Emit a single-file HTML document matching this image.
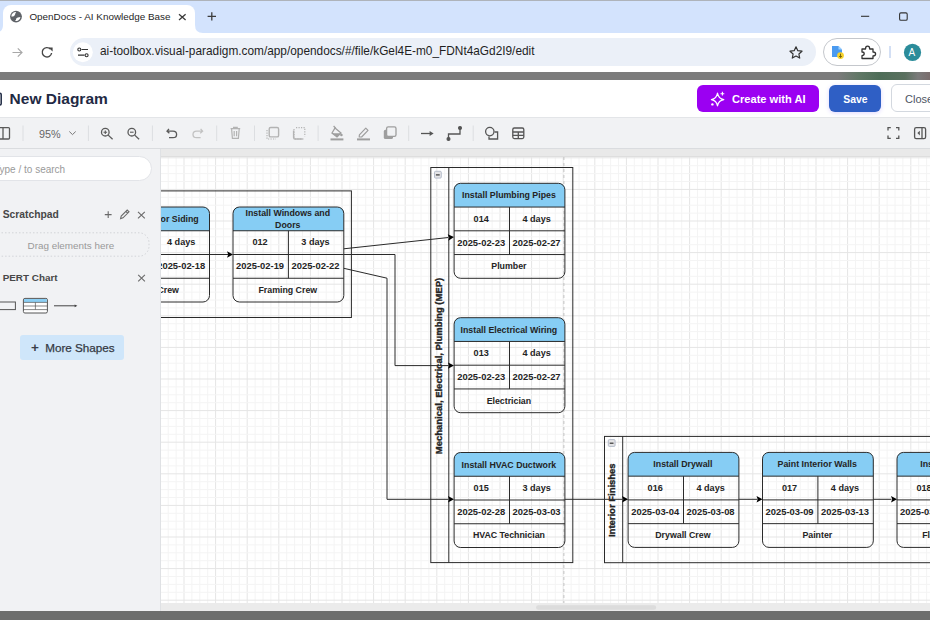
<!DOCTYPE html>
<html><head><meta charset="utf-8">
<style>
html,body{margin:0;padding:0;}
body{width:930px;height:620px;overflow:hidden;position:relative;background:#fff;font-family:"Liberation Sans",sans-serif;}
.a{position:absolute;}
svg{position:absolute;left:0;top:0;}
.t{white-space:nowrap;line-height:1;}
</style></head>
<body>
<!-- top border -->
<div class="a" style="left:0;top:0;width:930px;height:1px;background:#aeb3ba"></div>
<!-- tab bar -->
<div class="a" style="left:0;top:1px;width:930px;height:32px;background:#d3e3fd"></div>
<!-- active tab -->
<div class="a" style="left:3px;top:5px;width:192px;height:30px;background:#fff;border-radius:8px 8px 0 0"></div>
<svg width="930" height="40" style="left:0;top:0">
  <path d="M-6,33 Q3,33 3,25 L3,33 Z" fill="#fff"/>
  <path d="M195,25 Q195,33 203,33 L195,33 Z" fill="#fff"/>
  <!-- globe -->
  <circle cx="16" cy="16.6" r="5.9" fill="#5f6368"/>
  <path d="M11.3,16.6 Q11.2,13.6 13.6,12.4 Q15,11.8 16.2,12.2 Q15.2,13 15.1,14.6 Q14.6,16 13.2,16.6 Z" fill="#fff"/>
  <path d="M14.9,20.9 Q16.4,20.4 16.2,18.6 Q17.2,17.3 20.4,17.0 Q20.4,19.2 18.2,20.5 Q16.4,21.4 14.9,20.9 Z" fill="#fff"/>
  <!-- close x -->
  <path d="M179,14.3 L185.6,20 M185.6,14.3 L179,20" stroke="#3c3c3c" stroke-width="1.3"/>
  <!-- plus -->
  <path d="M211.8,12.3 L211.8,20.6 M207.6,16.45 L216,16.45" stroke="#3c3c3c" stroke-width="1.3"/>
  <!-- minimize -->
  <path d="M861,16.3 L869.2,16.3" stroke="#333" stroke-width="1.1"/>
  <rect x="899.6" y="12.9" width="7.6" height="7.4" rx="1.3" fill="none" stroke="#333" stroke-width="1.1"/>
</svg>
<div class="a t" style="left:29.4px;top:12.0px;font-size:9.88px;color:#262626">OpenDocs - AI Knowledge Base</div>

<!-- address toolbar -->
<div class="a" style="left:0;top:33px;width:930px;height:39px;background:#fff"></div>
<div class="a" style="left:69.5px;top:38.3px;width:746px;height:27.8px;background:#ebf0f8;border-radius:14px"></div>
<div class="a" style="left:823.3px;top:38.1px;width:57.5px;height:27.5px;border:1px solid #c4c7cc;border-radius:14px;box-sizing:border-box"></div>
<svg width="930" height="72" style="left:0;top:0">
  <!-- forward arrow -->
  <path d="M12.5,52.5 L22,52.5 M17.8,48.3 L22,52.5 L17.8,56.7" stroke="#a8a8a8" stroke-width="1.2" fill="none"/>
  <!-- reload -->
  <path d="M51.6,53 A4.7,4.7 0 1 1 50.3,49" stroke="#474747" stroke-width="1.4" fill="none"/>
  <path d="M48.4,47.4 L52.6,47.4 L52.6,51.4 Z" fill="#474747"/>
  <!-- site info -->
  <circle cx="82.8" cy="52.3" r="10" fill="#fff"/>
  <path d="M81.5,49.5 L88,49.5 M78,55.2 L84.5,55.2" stroke="#333" stroke-width="1.2"/>
  <circle cx="79.3" cy="49.5" r="1.5" fill="none" stroke="#333" stroke-width="1.1"/>
  <circle cx="86.6" cy="55.2" r="1.5" fill="none" stroke="#333" stroke-width="1.1"/>
  <!-- star -->
  <path d="M796,46.8 L797.8,50.7 L802,51.2 L798.9,54 L799.7,58.1 L796,56 L792.3,58.1 L793.1,54 L790,51.2 L794.2,50.7 Z" fill="none" stroke="#333" stroke-width="1.2" stroke-linejoin="round"/>
  <!-- ext icon 1 -->
  <path d="M832,46 L838.5,46 L842,49.5 L842,57 L832,57 Z" fill="#4a9af0"/>
  <path d="M838.5,46 L842,49.5 L838.5,49.5 Z" fill="#9fd3ff"/>
  <circle cx="840.5" cy="55.6" r="3.4" fill="#f6d22b"/>
  <path d="M840.5,53.7 L840.5,57.2 M839,56 L840.5,57.4 L842,56" stroke="#5b4a00" stroke-width="0.8" fill="none"/>
  <!-- puzzle -->
  <path d="M862,49 L865.5,49 Q865.5,46.2 867.6,46.2 Q869.7,46.2 869.7,49 L873,49 L873,52 Q875.6,52 875.6,53.9 Q875.6,55.8 873,55.8 L873,58.5 L862,58.5 L862,55.6 Q864.2,55.6 864.2,53.8 Q864.2,52 862,52 Z" fill="none" stroke="#333" stroke-width="1.3" stroke-linejoin="round"/>
  <!-- separator -->
  <path d="M890,46 L890,58" stroke="#a8c0ea" stroke-width="1"/>
  <!-- avatar -->
  <circle cx="912.5" cy="52.4" r="8.6" fill="#2b8c9a"/>
</svg>
<div class="a t" style="left:100px;top:46.2px;font-size:11.85px;color:#1f1f1f">ai-toolbox.visual-paradigm.com/app/opendocs/#/file/kGel4E-m0_FDNt4aGd2I9/edit</div>
<div class="a t" style="left:908.6px;top:47.6px;font-size:10px;color:#fff">A</div>

<!-- dark bar -->
<div class="a" style="left:0;top:72px;width:930px;height:8.2px;background:linear-gradient(90deg,#7b7b7b 0,#7b7b7b 838px,#5f7765 860px,#4e6d58 880px,#5a705f 905px,#7b7b7b 918px,#7a6d6d 930px)"></div>

<!-- app header -->
<div class="a" style="left:0;top:80.2px;width:930px;height:37px;background:#fff"></div>
<svg width="20" height="120" style="left:0;top:0"><path d="M-6,93.2 L0,93.2 Q1.2,93.2 1.2,94.4 L1.2,103.8 Q1.2,105 0,105 L-6,105" fill="none" stroke="#1f2a44" stroke-width="1.5"/></svg>
<div class="a t" style="left:9.6px;top:90.5px;font-size:15.5px;font-weight:bold;color:#1f2a44">New Diagram</div>
<div class="a" style="left:692px;top:80.5px;width:135px;height:36px;background:radial-gradient(ellipse at center,rgba(170,120,255,0.18),rgba(255,255,255,0) 70%)"></div>
<div class="a" style="left:697.1px;top:84.7px;width:121.8px;height:27.5px;background:#9b00f2;border-radius:6px"></div>
<svg width="930" height="120" style="left:0;top:0">
  <path d="M717.5,93.2 Q718.6,99 723.8,99.6 Q718.6,100.4 717.5,105.8 Q716.4,100.4 711.4,99.6 Q716.4,99 717.5,93.2 Z" fill="none" stroke="#fff" stroke-width="1.2" stroke-linejoin="round"/>
  <path d="M722.4,91.8 L722.4,95.6 M720.5,93.7 L724.3,93.7" stroke="#fff" stroke-width="1.1"/>
  <circle cx="712.4" cy="104.4" r="1.2" fill="#fff"/>
</svg>
<div class="a t" style="left:732px;top:94.0px;font-size:11.1px;font-weight:bold;color:#fff">Create with AI</div>
<div class="a" style="left:829.4px;top:85px;width:51.4px;height:27px;background:#2f5fc5;border-radius:6px;box-shadow:0 1px 4px rgba(120,90,255,0.25)"></div>
<div class="a t" style="left:843.3px;top:94.8px;font-size:10.4px;font-weight:bold;color:#fff">Save</div>
<div class="a" style="left:891.1px;top:84.3px;width:60px;height:27.9px;background:#fff;border:1px solid #d3d8df;border-radius:6px;box-sizing:border-box"></div>
<div class="a t" style="left:905px;top:93.6px;font-size:11px;color:#4d5563">Close</div>

<!-- toolbar -->
<div class="a" style="left:0;top:117px;width:930px;height:32px;background:#f1f2f4;border-top:1px solid #e3e5e8;border-bottom:1px solid #dadcdf;box-sizing:border-box"></div>
<svg width="930" height="150" style="left:0;top:0">
  <g fill="none" stroke="#5a5a5a" stroke-width="1.3">
    <!-- left panel icon -->
    <path d="M-2,127.6 L8.5,127.6 Q9.5,127.6 9.5,128.6 L9.5,138 Q9.5,139 8.5,139 L-2,139 M3,127.6 L3,139"/>
    <!-- chevron -->
    <path d="M69.3,131.5 L72.5,134.6 L75.7,131.5" stroke="#777" stroke-width="1"/>
    <!-- zoom in -->
    <circle cx="105.3" cy="132.2" r="3.8"/>
    <path d="M108.2,135.1 L112.6,139.3"/>
    <path d="M103.5,132.2 L107.1,132.2 M105.3,130.4 L105.3,134" stroke-width="1.1"/>
    <!-- zoom out -->
    <circle cx="131.8" cy="132.2" r="3.8"/>
    <path d="M134.7,135.1 L139.1,139.3"/>
    <path d="M130,132.2 L133.6,132.2" stroke-width="1.1"/>
    <!-- undo -->
    <path d="M169,128.8 L167,131.2 L169.4,133.3 M167.2,131.2 L173,131.2 Q176.6,131.2 176.6,134.4 Q176.6,137.6 173,137.6 L169,137.6"/>
    <!-- redo -->
    <path d="M200.6,128.8 L202.6,131.2 L200.2,133.3 M202.4,131.2 L196.6,131.2 Q193,131.2 193,134.4 Q193,137.6 196.6,137.6 L200.6,137.6" stroke="#c2c2c2"/>
  </g>
  <g fill="none" stroke="#b3b3b3" stroke-width="1.2">
    <!-- trash -->
    <path d="M230.6,128.6 L240.2,128.6 M233.6,128.6 L233.6,127.4 L237.2,127.4 L237.2,128.6 M231.6,129 L232.4,138.4 L238.4,138.4 L239.2,129 M234.2,131 L234.2,136.2 M236.6,131 L236.6,136.2"/>
    <!-- to front -->
    <rect x="269.2" y="127.5" width="9.4" height="9.4" rx="1.5" stroke-width="1.4"/>
    <path d="M267,130 L267,139 L276,139" stroke-dasharray="1.2,1.3"/>
    <!-- to back -->
    <path d="M296,127.6 L304.8,127.6 L304.8,136.4 M294,129 L294,137.6 Q294,139 295.4,139 L304,139" stroke-dasharray="1.2,1.3"/>
    <path d="M293.6,130.4 L293.6,137.4 Q293.6,139 295.2,139 L302.6,139" stroke-width="1.4"/>
  </g>
  <g fill="#9e9e9e" stroke="none">
    <!-- fill bucket -->
    <path d="M335,128 L341,133 L337,137 L332,133 Z" fill="none" stroke="#9e9e9e" stroke-width="1.3"/>
    <path d="M332.2,133.2 L340.6,133.2 L337,136.8 Z"/>
    <path d="M333.6,126 L335.8,128.4" stroke="#9e9e9e" stroke-width="1.2"/>
    <circle cx="341.4" cy="135" r="1.3"/>
    <rect x="330.5" y="138.4" width="12.9" height="2" />
    <!-- pen -->
    <path d="M359.4,134.8 L365.8,128.2 L368,130.4 L361.6,137 L359.2,137 Z" fill="none" stroke="#9e9e9e" stroke-width="1.2" stroke-linejoin="round"/>
    <rect x="357" y="138.4" width="13" height="2"/>
    <!-- shadow -->
    <rect x="383.8" y="129.8" width="9.2" height="9.2" rx="1.6"/>
    <rect x="386.6" y="126.9" width="9.4" height="9.4" rx="1.6" fill="#f1f2f4" stroke="#9e9e9e" stroke-width="1.3"/>
  </g>
  <g fill="none" stroke="#555" stroke-width="1.3">
    <!-- arrow -->
    <path d="M421,133.5 L430,133.5"/><path d="M429.6,131 L433.6,133.5 L429.6,136 Z" fill="#555" stroke="none"/>
    <!-- waypoint -->
    <path d="M448.5,139 L448.5,134 L460,134 L460,128.6"/>
    <circle cx="448.5" cy="139" r="1.4" fill="#555"/>
    <circle cx="460" cy="128" r="1.4" fill="#555"/>
    <!-- shapes -->
    <circle cx="489.8" cy="131.6" r="4.2"/>
    <path d="M494.6,132 L497.6,132 L497.6,139 L489,139 L489,136.4"/>
    <!-- table -->
    <rect x="512.8" y="128" width="11" height="10.6" rx="1.5"/>
    <path d="M512.8,132 L523.8,132 M512.8,135.3 L523.8,135.3 M518.3,132 L518.3,138.6"/>
    <!-- fullscreen -->
    <path d="M888,130.5 L888,127.7 L890.8,127.7 M896,127.7 L898.8,127.7 L898.8,130.5 M888,135.6 L888,138.4 L890.8,138.4 M898.8,135.6 L898.8,138.4 L896,138.4"/>
    <!-- panel right -->
    <rect x="914.6" y="127.6" width="11" height="11" rx="1.6"/>
    <path d="M922,127.6 L922,138.6"/>
    <path d="M919.8,130.8 L917.4,133.1 L919.8,135.4 Z" fill="#555" stroke="none"/>
  </g>
  <!-- separators -->
  <g stroke="#dcdee1" stroke-width="1">
    <path d="M23,125.5 L23,141"/><path d="M88.4,125.5 L88.4,141"/><path d="M152.4,125.5 L152.4,141"/>
    <path d="M216.7,125.5 L216.7,141"/><path d="M254.5,125.5 L254.5,141"/><path d="M318.1,125.5 L318.1,141"/>
    <path d="M408.7,125.5 L408.7,141"/><path d="M473.2,125.5 L473.2,141"/>
  </g>
</svg>
<div class="a t" style="left:39px;top:129px;font-size:10.8px;color:#666">95%</div>

<!-- sidebar -->
<div class="a" style="left:0;top:149px;width:160.5px;height:463px;background:#f1f2f4;border-right:1px solid #dfe1e4;box-sizing:border-box"></div>
<div class="a" style="left:-20px;top:156.1px;width:171.8px;height:25.3px;background:#fff;border:1px solid #e2e4e8;border-radius:13px;box-sizing:border-box"></div>
<div class="a t" style="left:-6px;top:164.6px;font-size:10px;color:#9a9a9a">Type / to search</div>
<div class="a t" style="left:2.7px;top:209.6px;font-size:10.3px;font-weight:bold;color:#474747">Scratchpad</div>
<svg width="160" height="400" style="left:0;top:0">
  <g stroke="#6a6a6a" stroke-width="1.1" fill="none">
    <path d="M108.2,211.3 L108.2,218 M104.8,214.6 L111.6,214.6"/>
    <path d="M120.6,218.6 L121.2,216 L127.2,210 L129,211.8 L123,217.8 Z M125.8,211.4 L127.6,213.2"/>
    <path d="M138,211.8 L144.8,218.4 M144.8,211.8 L138,218.4"/>
    <path d="M138.2,274.8 L144.9,281.4 M144.9,274.8 L138.2,281.4"/>
  </g>
  <rect x="-12" y="232.8" width="161" height="23.4" rx="10" fill="none" stroke="#d2d4d8" stroke-width="1" stroke-dasharray="1.5,2"/>
  <!-- shapes -->
  <rect x="-4" y="302" width="19.4" height="7.6" fill="none" stroke="#555" stroke-width="1"/>
  <rect x="23.4" y="298.4" width="24" height="14.6" rx="1.5" fill="#fff" stroke="#555" stroke-width="1"/>
  <rect x="24" y="299" width="22.8" height="3.4" fill="#8ccff4"/>
  <path d="M23.4,302.4 L47.4,302.4 M23.4,306 L47.4,306 M23.4,309.6 L47.4,309.6 M35.4,302.4 L35.4,309.6" stroke="#555" stroke-width="0.7"/>
  <path d="M54,305.8 L76,305.8" stroke="#444" stroke-width="1"/>
  <path d="M77.4,305.8 L74.6,304.4 L74.6,307.2 Z" fill="#444"/>
</svg>
<div class="a t" style="left:27.5px;top:240.8px;font-size:9.9px;color:#999">Drag elements here</div>
<div class="a t" style="left:2.7px;top:273.4px;font-size:9.9px;font-weight:bold;color:#474747">PERT Chart</div>
<div class="a" style="left:20px;top:335.4px;width:103.8px;height:24.5px;background:#cfe6fa;border-radius:3px"></div>
<div class="a t" style="left:31px;top:341.2px;font-size:13.5px;color:#3a3f4a;font-weight:bold">+</div>
<div class="a t" style="left:45.2px;top:342.2px;font-size:11.7px;color:#353a44;-webkit-text-stroke:0.25px #353a44">More Shapes</div>

<!-- canvas -->
<div class="a" style="left:160.5px;top:149px;width:770px;height:463px;background:#fff;overflow:hidden">
<svg width="770" height="463" style="left:0;top:0">
<g transform="translate(-160.5,-149)">
<rect x="160.5" y="149" width="770" height="8" fill="#e9e9e9"/>
<line x1="160.5" y1="156.6" x2="930" y2="156.6" stroke="#dddddd" stroke-width="1"/>
<line x1="167.70" y1="157.0" x2="167.70" y2="603.0" stroke="#f4f4f4" stroke-width="1"/>
<line x1="175.60" y1="157.0" x2="175.60" y2="603.0" stroke="#f4f4f4" stroke-width="1"/>
<line x1="183.50" y1="157.0" x2="183.50" y2="603.0" stroke="#e5e5e5" stroke-width="1"/>
<line x1="191.40" y1="157.0" x2="191.40" y2="603.0" stroke="#f4f4f4" stroke-width="1"/>
<line x1="199.30" y1="157.0" x2="199.30" y2="603.0" stroke="#f4f4f4" stroke-width="1"/>
<line x1="207.20" y1="157.0" x2="207.20" y2="603.0" stroke="#f4f4f4" stroke-width="1"/>
<line x1="215.10" y1="157.0" x2="215.10" y2="603.0" stroke="#e5e5e5" stroke-width="1"/>
<line x1="223.00" y1="157.0" x2="223.00" y2="603.0" stroke="#f4f4f4" stroke-width="1"/>
<line x1="230.90" y1="157.0" x2="230.90" y2="603.0" stroke="#f4f4f4" stroke-width="1"/>
<line x1="238.80" y1="157.0" x2="238.80" y2="603.0" stroke="#f4f4f4" stroke-width="1"/>
<line x1="246.70" y1="157.0" x2="246.70" y2="603.0" stroke="#e5e5e5" stroke-width="1"/>
<line x1="254.60" y1="157.0" x2="254.60" y2="603.0" stroke="#f4f4f4" stroke-width="1"/>
<line x1="262.50" y1="157.0" x2="262.50" y2="603.0" stroke="#f4f4f4" stroke-width="1"/>
<line x1="270.40" y1="157.0" x2="270.40" y2="603.0" stroke="#f4f4f4" stroke-width="1"/>
<line x1="278.30" y1="157.0" x2="278.30" y2="603.0" stroke="#e5e5e5" stroke-width="1"/>
<line x1="286.20" y1="157.0" x2="286.20" y2="603.0" stroke="#f4f4f4" stroke-width="1"/>
<line x1="294.10" y1="157.0" x2="294.10" y2="603.0" stroke="#f4f4f4" stroke-width="1"/>
<line x1="302.00" y1="157.0" x2="302.00" y2="603.0" stroke="#f4f4f4" stroke-width="1"/>
<line x1="309.90" y1="157.0" x2="309.90" y2="603.0" stroke="#e5e5e5" stroke-width="1"/>
<line x1="317.80" y1="157.0" x2="317.80" y2="603.0" stroke="#f4f4f4" stroke-width="1"/>
<line x1="325.70" y1="157.0" x2="325.70" y2="603.0" stroke="#f4f4f4" stroke-width="1"/>
<line x1="333.60" y1="157.0" x2="333.60" y2="603.0" stroke="#f4f4f4" stroke-width="1"/>
<line x1="341.50" y1="157.0" x2="341.50" y2="603.0" stroke="#e5e5e5" stroke-width="1"/>
<line x1="349.40" y1="157.0" x2="349.40" y2="603.0" stroke="#f4f4f4" stroke-width="1"/>
<line x1="357.30" y1="157.0" x2="357.30" y2="603.0" stroke="#f4f4f4" stroke-width="1"/>
<line x1="365.20" y1="157.0" x2="365.20" y2="603.0" stroke="#f4f4f4" stroke-width="1"/>
<line x1="373.10" y1="157.0" x2="373.10" y2="603.0" stroke="#e5e5e5" stroke-width="1"/>
<line x1="381.00" y1="157.0" x2="381.00" y2="603.0" stroke="#f4f4f4" stroke-width="1"/>
<line x1="388.90" y1="157.0" x2="388.90" y2="603.0" stroke="#f4f4f4" stroke-width="1"/>
<line x1="396.80" y1="157.0" x2="396.80" y2="603.0" stroke="#f4f4f4" stroke-width="1"/>
<line x1="404.70" y1="157.0" x2="404.70" y2="603.0" stroke="#e5e5e5" stroke-width="1"/>
<line x1="412.60" y1="157.0" x2="412.60" y2="603.0" stroke="#f4f4f4" stroke-width="1"/>
<line x1="420.50" y1="157.0" x2="420.50" y2="603.0" stroke="#f4f4f4" stroke-width="1"/>
<line x1="428.40" y1="157.0" x2="428.40" y2="603.0" stroke="#f4f4f4" stroke-width="1"/>
<line x1="436.30" y1="157.0" x2="436.30" y2="603.0" stroke="#e5e5e5" stroke-width="1"/>
<line x1="444.20" y1="157.0" x2="444.20" y2="603.0" stroke="#f4f4f4" stroke-width="1"/>
<line x1="452.10" y1="157.0" x2="452.10" y2="603.0" stroke="#f4f4f4" stroke-width="1"/>
<line x1="460.00" y1="157.0" x2="460.00" y2="603.0" stroke="#f4f4f4" stroke-width="1"/>
<line x1="467.90" y1="157.0" x2="467.90" y2="603.0" stroke="#e5e5e5" stroke-width="1"/>
<line x1="475.80" y1="157.0" x2="475.80" y2="603.0" stroke="#f4f4f4" stroke-width="1"/>
<line x1="483.70" y1="157.0" x2="483.70" y2="603.0" stroke="#f4f4f4" stroke-width="1"/>
<line x1="491.60" y1="157.0" x2="491.60" y2="603.0" stroke="#f4f4f4" stroke-width="1"/>
<line x1="499.50" y1="157.0" x2="499.50" y2="603.0" stroke="#e5e5e5" stroke-width="1"/>
<line x1="507.40" y1="157.0" x2="507.40" y2="603.0" stroke="#f4f4f4" stroke-width="1"/>
<line x1="515.30" y1="157.0" x2="515.30" y2="603.0" stroke="#f4f4f4" stroke-width="1"/>
<line x1="523.20" y1="157.0" x2="523.20" y2="603.0" stroke="#f4f4f4" stroke-width="1"/>
<line x1="531.10" y1="157.0" x2="531.10" y2="603.0" stroke="#e5e5e5" stroke-width="1"/>
<line x1="539.00" y1="157.0" x2="539.00" y2="603.0" stroke="#f4f4f4" stroke-width="1"/>
<line x1="546.90" y1="157.0" x2="546.90" y2="603.0" stroke="#f4f4f4" stroke-width="1"/>
<line x1="554.80" y1="157.0" x2="554.80" y2="603.0" stroke="#f4f4f4" stroke-width="1"/>
<line x1="562.70" y1="157.0" x2="562.70" y2="603.0" stroke="#e5e5e5" stroke-width="1"/>
<line x1="570.60" y1="157.0" x2="570.60" y2="603.0" stroke="#f4f4f4" stroke-width="1"/>
<line x1="578.50" y1="157.0" x2="578.50" y2="603.0" stroke="#f4f4f4" stroke-width="1"/>
<line x1="586.40" y1="157.0" x2="586.40" y2="603.0" stroke="#f4f4f4" stroke-width="1"/>
<line x1="594.30" y1="157.0" x2="594.30" y2="603.0" stroke="#e5e5e5" stroke-width="1"/>
<line x1="602.20" y1="157.0" x2="602.20" y2="603.0" stroke="#f4f4f4" stroke-width="1"/>
<line x1="610.10" y1="157.0" x2="610.10" y2="603.0" stroke="#f4f4f4" stroke-width="1"/>
<line x1="618.00" y1="157.0" x2="618.00" y2="603.0" stroke="#f4f4f4" stroke-width="1"/>
<line x1="625.90" y1="157.0" x2="625.90" y2="603.0" stroke="#e5e5e5" stroke-width="1"/>
<line x1="633.80" y1="157.0" x2="633.80" y2="603.0" stroke="#f4f4f4" stroke-width="1"/>
<line x1="641.70" y1="157.0" x2="641.70" y2="603.0" stroke="#f4f4f4" stroke-width="1"/>
<line x1="649.60" y1="157.0" x2="649.60" y2="603.0" stroke="#f4f4f4" stroke-width="1"/>
<line x1="657.50" y1="157.0" x2="657.50" y2="603.0" stroke="#e5e5e5" stroke-width="1"/>
<line x1="665.40" y1="157.0" x2="665.40" y2="603.0" stroke="#f4f4f4" stroke-width="1"/>
<line x1="673.30" y1="157.0" x2="673.30" y2="603.0" stroke="#f4f4f4" stroke-width="1"/>
<line x1="681.20" y1="157.0" x2="681.20" y2="603.0" stroke="#f4f4f4" stroke-width="1"/>
<line x1="689.10" y1="157.0" x2="689.10" y2="603.0" stroke="#e5e5e5" stroke-width="1"/>
<line x1="697.00" y1="157.0" x2="697.00" y2="603.0" stroke="#f4f4f4" stroke-width="1"/>
<line x1="704.90" y1="157.0" x2="704.90" y2="603.0" stroke="#f4f4f4" stroke-width="1"/>
<line x1="712.80" y1="157.0" x2="712.80" y2="603.0" stroke="#f4f4f4" stroke-width="1"/>
<line x1="720.70" y1="157.0" x2="720.70" y2="603.0" stroke="#e5e5e5" stroke-width="1"/>
<line x1="728.60" y1="157.0" x2="728.60" y2="603.0" stroke="#f4f4f4" stroke-width="1"/>
<line x1="736.50" y1="157.0" x2="736.50" y2="603.0" stroke="#f4f4f4" stroke-width="1"/>
<line x1="744.40" y1="157.0" x2="744.40" y2="603.0" stroke="#f4f4f4" stroke-width="1"/>
<line x1="752.30" y1="157.0" x2="752.30" y2="603.0" stroke="#e5e5e5" stroke-width="1"/>
<line x1="760.20" y1="157.0" x2="760.20" y2="603.0" stroke="#f4f4f4" stroke-width="1"/>
<line x1="768.10" y1="157.0" x2="768.10" y2="603.0" stroke="#f4f4f4" stroke-width="1"/>
<line x1="776.00" y1="157.0" x2="776.00" y2="603.0" stroke="#f4f4f4" stroke-width="1"/>
<line x1="783.90" y1="157.0" x2="783.90" y2="603.0" stroke="#e5e5e5" stroke-width="1"/>
<line x1="791.80" y1="157.0" x2="791.80" y2="603.0" stroke="#f4f4f4" stroke-width="1"/>
<line x1="799.70" y1="157.0" x2="799.70" y2="603.0" stroke="#f4f4f4" stroke-width="1"/>
<line x1="807.60" y1="157.0" x2="807.60" y2="603.0" stroke="#f4f4f4" stroke-width="1"/>
<line x1="815.50" y1="157.0" x2="815.50" y2="603.0" stroke="#e5e5e5" stroke-width="1"/>
<line x1="823.40" y1="157.0" x2="823.40" y2="603.0" stroke="#f4f4f4" stroke-width="1"/>
<line x1="831.30" y1="157.0" x2="831.30" y2="603.0" stroke="#f4f4f4" stroke-width="1"/>
<line x1="839.20" y1="157.0" x2="839.20" y2="603.0" stroke="#f4f4f4" stroke-width="1"/>
<line x1="847.10" y1="157.0" x2="847.10" y2="603.0" stroke="#e5e5e5" stroke-width="1"/>
<line x1="855.00" y1="157.0" x2="855.00" y2="603.0" stroke="#f4f4f4" stroke-width="1"/>
<line x1="862.90" y1="157.0" x2="862.90" y2="603.0" stroke="#f4f4f4" stroke-width="1"/>
<line x1="870.80" y1="157.0" x2="870.80" y2="603.0" stroke="#f4f4f4" stroke-width="1"/>
<line x1="878.70" y1="157.0" x2="878.70" y2="603.0" stroke="#e5e5e5" stroke-width="1"/>
<line x1="886.60" y1="157.0" x2="886.60" y2="603.0" stroke="#f4f4f4" stroke-width="1"/>
<line x1="894.50" y1="157.0" x2="894.50" y2="603.0" stroke="#f4f4f4" stroke-width="1"/>
<line x1="902.40" y1="157.0" x2="902.40" y2="603.0" stroke="#f4f4f4" stroke-width="1"/>
<line x1="910.30" y1="157.0" x2="910.30" y2="603.0" stroke="#e5e5e5" stroke-width="1"/>
<line x1="918.20" y1="157.0" x2="918.20" y2="603.0" stroke="#f4f4f4" stroke-width="1"/>
<line x1="926.10" y1="157.0" x2="926.10" y2="603.0" stroke="#f4f4f4" stroke-width="1"/>
<line x1="160.5" y1="157.80" x2="930" y2="157.80" stroke="#e5e5e5" stroke-width="1"/>
<line x1="160.5" y1="165.70" x2="930" y2="165.70" stroke="#f4f4f4" stroke-width="1"/>
<line x1="160.5" y1="173.60" x2="930" y2="173.60" stroke="#f4f4f4" stroke-width="1"/>
<line x1="160.5" y1="181.50" x2="930" y2="181.50" stroke="#f4f4f4" stroke-width="1"/>
<line x1="160.5" y1="189.40" x2="930" y2="189.40" stroke="#e5e5e5" stroke-width="1"/>
<line x1="160.5" y1="197.30" x2="930" y2="197.30" stroke="#f4f4f4" stroke-width="1"/>
<line x1="160.5" y1="205.20" x2="930" y2="205.20" stroke="#f4f4f4" stroke-width="1"/>
<line x1="160.5" y1="213.10" x2="930" y2="213.10" stroke="#f4f4f4" stroke-width="1"/>
<line x1="160.5" y1="221.00" x2="930" y2="221.00" stroke="#e5e5e5" stroke-width="1"/>
<line x1="160.5" y1="228.90" x2="930" y2="228.90" stroke="#f4f4f4" stroke-width="1"/>
<line x1="160.5" y1="236.80" x2="930" y2="236.80" stroke="#f4f4f4" stroke-width="1"/>
<line x1="160.5" y1="244.70" x2="930" y2="244.70" stroke="#f4f4f4" stroke-width="1"/>
<line x1="160.5" y1="252.60" x2="930" y2="252.60" stroke="#e5e5e5" stroke-width="1"/>
<line x1="160.5" y1="260.50" x2="930" y2="260.50" stroke="#f4f4f4" stroke-width="1"/>
<line x1="160.5" y1="268.40" x2="930" y2="268.40" stroke="#f4f4f4" stroke-width="1"/>
<line x1="160.5" y1="276.30" x2="930" y2="276.30" stroke="#f4f4f4" stroke-width="1"/>
<line x1="160.5" y1="284.20" x2="930" y2="284.20" stroke="#e5e5e5" stroke-width="1"/>
<line x1="160.5" y1="292.10" x2="930" y2="292.10" stroke="#f4f4f4" stroke-width="1"/>
<line x1="160.5" y1="300.00" x2="930" y2="300.00" stroke="#f4f4f4" stroke-width="1"/>
<line x1="160.5" y1="307.90" x2="930" y2="307.90" stroke="#f4f4f4" stroke-width="1"/>
<line x1="160.5" y1="315.80" x2="930" y2="315.80" stroke="#e5e5e5" stroke-width="1"/>
<line x1="160.5" y1="323.70" x2="930" y2="323.70" stroke="#f4f4f4" stroke-width="1"/>
<line x1="160.5" y1="331.60" x2="930" y2="331.60" stroke="#f4f4f4" stroke-width="1"/>
<line x1="160.5" y1="339.50" x2="930" y2="339.50" stroke="#f4f4f4" stroke-width="1"/>
<line x1="160.5" y1="347.40" x2="930" y2="347.40" stroke="#e5e5e5" stroke-width="1"/>
<line x1="160.5" y1="355.30" x2="930" y2="355.30" stroke="#f4f4f4" stroke-width="1"/>
<line x1="160.5" y1="363.20" x2="930" y2="363.20" stroke="#f4f4f4" stroke-width="1"/>
<line x1="160.5" y1="371.10" x2="930" y2="371.10" stroke="#f4f4f4" stroke-width="1"/>
<line x1="160.5" y1="379.00" x2="930" y2="379.00" stroke="#e5e5e5" stroke-width="1"/>
<line x1="160.5" y1="386.90" x2="930" y2="386.90" stroke="#f4f4f4" stroke-width="1"/>
<line x1="160.5" y1="394.80" x2="930" y2="394.80" stroke="#f4f4f4" stroke-width="1"/>
<line x1="160.5" y1="402.70" x2="930" y2="402.70" stroke="#f4f4f4" stroke-width="1"/>
<line x1="160.5" y1="410.60" x2="930" y2="410.60" stroke="#e5e5e5" stroke-width="1"/>
<line x1="160.5" y1="418.50" x2="930" y2="418.50" stroke="#f4f4f4" stroke-width="1"/>
<line x1="160.5" y1="426.40" x2="930" y2="426.40" stroke="#f4f4f4" stroke-width="1"/>
<line x1="160.5" y1="434.30" x2="930" y2="434.30" stroke="#f4f4f4" stroke-width="1"/>
<line x1="160.5" y1="442.20" x2="930" y2="442.20" stroke="#e5e5e5" stroke-width="1"/>
<line x1="160.5" y1="450.10" x2="930" y2="450.10" stroke="#f4f4f4" stroke-width="1"/>
<line x1="160.5" y1="458.00" x2="930" y2="458.00" stroke="#f4f4f4" stroke-width="1"/>
<line x1="160.5" y1="465.90" x2="930" y2="465.90" stroke="#f4f4f4" stroke-width="1"/>
<line x1="160.5" y1="473.80" x2="930" y2="473.80" stroke="#e5e5e5" stroke-width="1"/>
<line x1="160.5" y1="481.70" x2="930" y2="481.70" stroke="#f4f4f4" stroke-width="1"/>
<line x1="160.5" y1="489.60" x2="930" y2="489.60" stroke="#f4f4f4" stroke-width="1"/>
<line x1="160.5" y1="497.50" x2="930" y2="497.50" stroke="#f4f4f4" stroke-width="1"/>
<line x1="160.5" y1="505.40" x2="930" y2="505.40" stroke="#e5e5e5" stroke-width="1"/>
<line x1="160.5" y1="513.30" x2="930" y2="513.30" stroke="#f4f4f4" stroke-width="1"/>
<line x1="160.5" y1="521.20" x2="930" y2="521.20" stroke="#f4f4f4" stroke-width="1"/>
<line x1="160.5" y1="529.10" x2="930" y2="529.10" stroke="#f4f4f4" stroke-width="1"/>
<line x1="160.5" y1="537.00" x2="930" y2="537.00" stroke="#e5e5e5" stroke-width="1"/>
<line x1="160.5" y1="544.90" x2="930" y2="544.90" stroke="#f4f4f4" stroke-width="1"/>
<line x1="160.5" y1="552.80" x2="930" y2="552.80" stroke="#f4f4f4" stroke-width="1"/>
<line x1="160.5" y1="560.70" x2="930" y2="560.70" stroke="#f4f4f4" stroke-width="1"/>
<line x1="160.5" y1="568.60" x2="930" y2="568.60" stroke="#e5e5e5" stroke-width="1"/>
<line x1="160.5" y1="576.50" x2="930" y2="576.50" stroke="#f4f4f4" stroke-width="1"/>
<line x1="160.5" y1="584.40" x2="930" y2="584.40" stroke="#f4f4f4" stroke-width="1"/>
<line x1="160.5" y1="592.30" x2="930" y2="592.30" stroke="#f4f4f4" stroke-width="1"/>
<line x1="160.5" y1="600.20" x2="930" y2="600.20" stroke="#e5e5e5" stroke-width="1"/>
<line x1="563.4" y1="157" x2="563.4" y2="603" stroke="#bdbdbd" stroke-width="0.9" stroke-dasharray="3,3"/>
<g font-family="Liberation Sans" font-weight="bold" fill="#242424">
<rect x="60" y="190.9" width="290.9" height="126.6" fill="none" stroke="#2a2a2a" stroke-width="1.0"/>
<path d="M98.2,230.75 L98.2,213.5 Q98.2,207.0 104.7,207.0 L202.5,207.0 Q209.0,207.0 209.0,213.5 L209.0,230.75 Z" fill="#86cdf4"/>
<rect x="98.2" y="207.0" width="110.8" height="95.0" rx="6.5" ry="6.5" fill="none" stroke="#2a2a2a" stroke-width="1.0"/>
<line x1="98.2" y1="230.75" x2="209.0" y2="230.75" stroke="#2a2a2a" stroke-width="1.0"/>
<line x1="98.2" y1="254.50" x2="209.0" y2="254.50" stroke="#2a2a2a" stroke-width="1.0"/>
<line x1="98.2" y1="278.25" x2="209.0" y2="278.25" stroke="#2a2a2a" stroke-width="1.0"/>
<line x1="153.60" y1="230.75" x2="153.60" y2="278.25" stroke="#2a2a2a" stroke-width="1.0"/>
<text x="153.00" y="222.07" font-size="8.8" text-anchor="middle">Install Exterior Siding</text>
<text x="125.30" y="245.43" font-size="9.1" text-anchor="middle">011</text>
<text x="180.70" y="245.43" font-size="9.1" text-anchor="middle">4 days</text>
<text x="125.30" y="269.27" font-size="9.4" text-anchor="middle">2025-02-15</text>
<text x="180.70" y="269.27" font-size="9.4" text-anchor="middle">2025-02-18</text>
<text x="153.00" y="292.93" font-size="8.8" text-anchor="middle">Siding Crew</text>
<path d="M232.5,230.75 L232.5,213.5 Q232.5,207.0 239.0,207.0 L336.8,207.0 Q343.3,207.0 343.3,213.5 L343.3,230.75 Z" fill="#86cdf4"/>
<rect x="232.5" y="207.0" width="110.8" height="95.0" rx="6.5" ry="6.5" fill="none" stroke="#2a2a2a" stroke-width="1.0"/>
<line x1="232.5" y1="230.75" x2="343.3" y2="230.75" stroke="#2a2a2a" stroke-width="1.0"/>
<line x1="232.5" y1="254.50" x2="343.3" y2="254.50" stroke="#2a2a2a" stroke-width="1.0"/>
<line x1="232.5" y1="278.25" x2="343.3" y2="278.25" stroke="#2a2a2a" stroke-width="1.0"/>
<line x1="287.90" y1="230.75" x2="287.90" y2="278.25" stroke="#2a2a2a" stroke-width="1.0"/>
<text x="287.30" y="216.38" font-size="8.8" text-anchor="middle">Install Windows and</text>
<text x="287.30" y="227.88" font-size="8.8" text-anchor="middle">Doors</text>
<text x="259.60" y="245.43" font-size="9.1" text-anchor="middle">012</text>
<text x="315.00" y="245.43" font-size="9.1" text-anchor="middle">3 days</text>
<text x="259.60" y="269.27" font-size="9.4" text-anchor="middle">2025-02-19</text>
<text x="315.00" y="269.27" font-size="9.4" text-anchor="middle">2025-02-22</text>
<text x="287.30" y="292.93" font-size="8.8" text-anchor="middle">Framing Crew</text>
<rect x="430.3" y="167.5" width="142.0" height="395.1" fill="none" stroke="#2a2a2a" stroke-width="1.0"/>
<line x1="448.3" y1="167.5" x2="448.3" y2="562.6" stroke="#2a2a2a" stroke-width="1.0"/>
<rect x="434.0" y="171.3" width="6.8" height="6.8" rx="1" fill="#e4e4e6" stroke="#a7b0c2" stroke-width="0.8"/><line x1="435.40000000000003" y1="174.9" x2="439.20000000000005" y2="174.9" stroke="#333" stroke-width="1.2"/>
<text x="0" y="0" font-size="9.47" text-anchor="middle" stroke="#1f1f1f" stroke-width="0.35" transform="translate(441.6,366.0) rotate(-90)">Mechanical, Electrical, Plumbing (MEP)</text>
<path d="M453.6,207.05 L453.6,189.8 Q453.6,183.3 460.1,183.3 L557.9,183.3 Q564.4,183.3 564.4,189.8 L564.4,207.05 Z" fill="#86cdf4"/>
<rect x="453.6" y="183.3" width="110.8" height="95.0" rx="6.5" ry="6.5" fill="none" stroke="#2a2a2a" stroke-width="1.0"/>
<line x1="453.6" y1="207.05" x2="564.4" y2="207.05" stroke="#2a2a2a" stroke-width="1.0"/>
<line x1="453.6" y1="230.80" x2="564.4" y2="230.80" stroke="#2a2a2a" stroke-width="1.0"/>
<line x1="453.6" y1="254.55" x2="564.4" y2="254.55" stroke="#2a2a2a" stroke-width="1.0"/>
<line x1="509.00" y1="207.05" x2="509.00" y2="254.55" stroke="#2a2a2a" stroke-width="1.0"/>
<text x="508.40" y="198.38" font-size="8.8" text-anchor="middle">Install Plumbing Pipes</text>
<text x="480.70" y="221.73" font-size="9.1" text-anchor="middle">014</text>
<text x="536.10" y="221.73" font-size="9.1" text-anchor="middle">4 days</text>
<text x="480.70" y="245.58" font-size="9.4" text-anchor="middle">2025-02-23</text>
<text x="536.10" y="245.58" font-size="9.4" text-anchor="middle">2025-02-27</text>
<text x="508.40" y="269.23" font-size="8.8" text-anchor="middle">Plumber</text>
<path d="M453.6,341.45 L453.6,324.2 Q453.6,317.7 460.1,317.7 L557.9,317.7 Q564.4,317.7 564.4,324.2 L564.4,341.45 Z" fill="#86cdf4"/>
<rect x="453.6" y="317.7" width="110.8" height="95.0" rx="6.5" ry="6.5" fill="none" stroke="#2a2a2a" stroke-width="1.0"/>
<line x1="453.6" y1="341.45" x2="564.4" y2="341.45" stroke="#2a2a2a" stroke-width="1.0"/>
<line x1="453.6" y1="365.20" x2="564.4" y2="365.20" stroke="#2a2a2a" stroke-width="1.0"/>
<line x1="453.6" y1="388.95" x2="564.4" y2="388.95" stroke="#2a2a2a" stroke-width="1.0"/>
<line x1="509.00" y1="341.45" x2="509.00" y2="388.95" stroke="#2a2a2a" stroke-width="1.0"/>
<text x="508.40" y="332.77" font-size="8.8" text-anchor="middle">Install Electrical Wiring</text>
<text x="480.70" y="356.12" font-size="9.1" text-anchor="middle">013</text>
<text x="536.10" y="356.12" font-size="9.1" text-anchor="middle">4 days</text>
<text x="480.70" y="379.97" font-size="9.4" text-anchor="middle">2025-02-23</text>
<text x="536.10" y="379.97" font-size="9.4" text-anchor="middle">2025-02-27</text>
<text x="508.40" y="403.62" font-size="8.8" text-anchor="middle">Electrician</text>
<path d="M453.6,476.25 L453.6,459.0 Q453.6,452.5 460.1,452.5 L557.9,452.5 Q564.4,452.5 564.4,459.0 L564.4,476.25 Z" fill="#86cdf4"/>
<rect x="453.6" y="452.5" width="110.8" height="95.0" rx="6.5" ry="6.5" fill="none" stroke="#2a2a2a" stroke-width="1.0"/>
<line x1="453.6" y1="476.25" x2="564.4" y2="476.25" stroke="#2a2a2a" stroke-width="1.0"/>
<line x1="453.6" y1="500.00" x2="564.4" y2="500.00" stroke="#2a2a2a" stroke-width="1.0"/>
<line x1="453.6" y1="523.75" x2="564.4" y2="523.75" stroke="#2a2a2a" stroke-width="1.0"/>
<line x1="509.00" y1="476.25" x2="509.00" y2="523.75" stroke="#2a2a2a" stroke-width="1.0"/>
<text x="508.40" y="467.57" font-size="8.8" text-anchor="middle">Install HVAC Ductwork</text>
<text x="480.70" y="490.93" font-size="9.1" text-anchor="middle">015</text>
<text x="536.10" y="490.93" font-size="9.1" text-anchor="middle">3 days</text>
<text x="480.70" y="514.77" font-size="9.4" text-anchor="middle">2025-02-28</text>
<text x="536.10" y="514.77" font-size="9.4" text-anchor="middle">2025-03-03</text>
<text x="508.40" y="538.42" font-size="8.8" text-anchor="middle">HVAC Technician</text>
<rect x="604.0" y="436.4" width="500" height="126.3" fill="none" stroke="#2a2a2a" stroke-width="1.0"/>
<line x1="622.2" y1="436.4" x2="622.2" y2="562.7" stroke="#2a2a2a" stroke-width="1.0"/>
<rect x="607.8" y="439.59999999999997" width="6.8" height="6.8" rx="1" fill="#e4e4e6" stroke="#a7b0c2" stroke-width="0.8"/><line x1="609.1999999999999" y1="443.2" x2="613.0" y2="443.2" stroke="#333" stroke-width="1.2"/>
<text x="0" y="0" font-size="9.47" text-anchor="middle" stroke="#1f1f1f" stroke-width="0.35" transform="translate(614.6,500.2) rotate(-90)">Interior Finishes</text>
<path d="M627.6,476.15 L627.6,458.9 Q627.6,452.4 634.1,452.4 L731.9,452.4 Q738.4,452.4 738.4,458.9 L738.4,476.15 Z" fill="#86cdf4"/>
<rect x="627.6" y="452.4" width="110.8" height="95.0" rx="6.5" ry="6.5" fill="none" stroke="#2a2a2a" stroke-width="1.0"/>
<line x1="627.6" y1="476.15" x2="738.4" y2="476.15" stroke="#2a2a2a" stroke-width="1.0"/>
<line x1="627.6" y1="499.90" x2="738.4" y2="499.90" stroke="#2a2a2a" stroke-width="1.0"/>
<line x1="627.6" y1="523.65" x2="738.4" y2="523.65" stroke="#2a2a2a" stroke-width="1.0"/>
<line x1="683.00" y1="476.15" x2="683.00" y2="523.65" stroke="#2a2a2a" stroke-width="1.0"/>
<text x="682.40" y="467.47" font-size="8.8" text-anchor="middle">Install Drywall</text>
<text x="654.70" y="490.82" font-size="9.1" text-anchor="middle">016</text>
<text x="710.10" y="490.82" font-size="9.1" text-anchor="middle">4 days</text>
<text x="654.70" y="514.67" font-size="9.4" text-anchor="middle">2025-03-04</text>
<text x="710.10" y="514.67" font-size="9.4" text-anchor="middle">2025-03-08</text>
<text x="682.40" y="538.32" font-size="8.8" text-anchor="middle">Drywall Crew</text>
<path d="M762.0,476.15 L762.0,458.9 Q762.0,452.4 768.5,452.4 L866.3,452.4 Q872.8,452.4 872.8,458.9 L872.8,476.15 Z" fill="#86cdf4"/>
<rect x="762.0" y="452.4" width="110.8" height="95.0" rx="6.5" ry="6.5" fill="none" stroke="#2a2a2a" stroke-width="1.0"/>
<line x1="762.0" y1="476.15" x2="872.8" y2="476.15" stroke="#2a2a2a" stroke-width="1.0"/>
<line x1="762.0" y1="499.90" x2="872.8" y2="499.90" stroke="#2a2a2a" stroke-width="1.0"/>
<line x1="762.0" y1="523.65" x2="872.8" y2="523.65" stroke="#2a2a2a" stroke-width="1.0"/>
<line x1="817.40" y1="476.15" x2="817.40" y2="523.65" stroke="#2a2a2a" stroke-width="1.0"/>
<text x="816.80" y="467.47" font-size="8.8" text-anchor="middle">Paint Interior Walls</text>
<text x="789.10" y="490.82" font-size="9.1" text-anchor="middle">017</text>
<text x="844.50" y="490.82" font-size="9.1" text-anchor="middle">4 days</text>
<text x="789.10" y="514.67" font-size="9.4" text-anchor="middle">2025-03-09</text>
<text x="844.50" y="514.67" font-size="9.4" text-anchor="middle">2025-03-13</text>
<text x="816.80" y="538.32" font-size="8.8" text-anchor="middle">Painter</text>
<path d="M896.5,476.15 L896.5,458.9 Q896.5,452.4 903.0,452.4 L1000.8,452.4 Q1007.3,452.4 1007.3,458.9 L1007.3,476.15 Z" fill="#86cdf4"/>
<rect x="896.5" y="452.4" width="110.8" height="95.0" rx="6.5" ry="6.5" fill="none" stroke="#2a2a2a" stroke-width="1.0"/>
<line x1="896.5" y1="476.15" x2="1007.3" y2="476.15" stroke="#2a2a2a" stroke-width="1.0"/>
<line x1="896.5" y1="499.90" x2="1007.3" y2="499.90" stroke="#2a2a2a" stroke-width="1.0"/>
<line x1="896.5" y1="523.65" x2="1007.3" y2="523.65" stroke="#2a2a2a" stroke-width="1.0"/>
<line x1="951.90" y1="476.15" x2="951.90" y2="523.65" stroke="#2a2a2a" stroke-width="1.0"/>
<text x="951.30" y="467.47" font-size="8.8" text-anchor="middle">Install Flooring</text>
<text x="923.60" y="490.82" font-size="9.1" text-anchor="middle">018</text>
<text x="979.00" y="490.82" font-size="9.1" text-anchor="middle">5 days</text>
<text x="923.60" y="514.67" font-size="9.4" text-anchor="middle">2025-03-14</text>
<text x="979.00" y="514.67" font-size="9.4" text-anchor="middle">2025-03-19</text>
<text x="951.30" y="538.32" font-size="8.8" text-anchor="middle">Flooring Crew</text>
<polyline points="209.0,254.5 228,254.5" fill="none" stroke="#2a2a2a" stroke-width="1.0"/>
<path d="M232.50,254.50 L226.50,251.30 L227.70,254.50 L226.50,257.70 Z" fill="#000"/>
<polyline points="343.3,248.8 447.5,237.55" fill="none" stroke="#2a2a2a" stroke-width="1.0"/>
<path d="M453.50,236.90 L447.19,234.36 L448.73,237.42 L447.88,240.73 Z" fill="#000"/>
<polyline points="343.3,254.5 394.5,254.5 394.5,365.6 448,365.6" fill="none" stroke="#2a2a2a" stroke-width="1.0"/>
<path d="M453.50,365.60 L447.50,362.40 L448.70,365.60 L447.50,368.80 Z" fill="#000"/>
<polyline points="343.3,268.3 386.5,278.2 386.5,499.3 448,499.3" fill="none" stroke="#2a2a2a" stroke-width="1.0"/>
<path d="M453.50,499.30 L447.50,496.10 L448.70,499.30 L447.50,502.50 Z" fill="#000"/>
<polyline points="564.4,499.3 622,499.3" fill="none" stroke="#2a2a2a" stroke-width="1.0"/>
<path d="M627.60,499.30 L621.60,496.10 L622.80,499.30 L621.60,502.50 Z" fill="#000"/>
<polyline points="738.4,499.3 757,499.3" fill="none" stroke="#2a2a2a" stroke-width="1.0"/>
<path d="M762.00,499.30 L756.00,496.10 L757.20,499.30 L756.00,502.50 Z" fill="#000"/>
<polyline points="872.8,499.3 891,499.3" fill="none" stroke="#2a2a2a" stroke-width="1.0"/>
<path d="M896.50,499.30 L890.50,496.10 L891.70,499.30 L890.50,502.50 Z" fill="#000"/>
</g>
<rect x="160.5" y="603" width="770" height="9" fill="#ebebeb"/>
<rect x="535.6" y="605.3" width="120" height="4.4" rx="2" fill="#dcdcdc"/>
</g>
</svg>
</div>
<!-- bottom dark bar -->
<div class="a" style="left:0;top:611px;width:930px;height:9px;background:#6d6e6d"></div>
</body></html>
